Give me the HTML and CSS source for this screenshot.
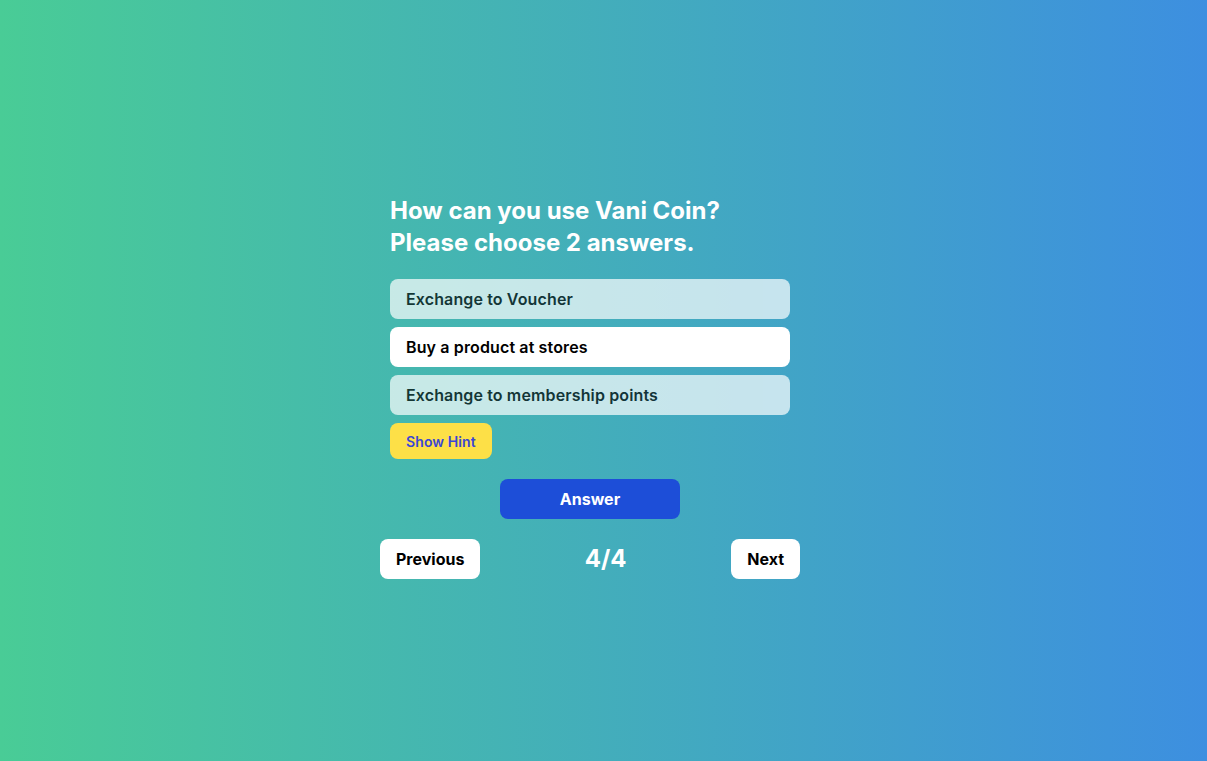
FILE: index.html
```html
<!DOCTYPE html>
<html lang="en">
<head>
<meta charset="utf-8">
<title>Quiz</title>
<link rel="stylesheet" href="styles.css">
</head>
<body>
<main class="page">
  <section class="quiz">
    <h1 class="question">How can you use Vani Coin?<br>Please choose 2 answers.</h1>
    <div class="options">
      <button class="option dim">Exchange to Voucher</button>
      <button class="option">Buy a product at stores</button>
      <button class="option dim">Exchange to membership points</button>
    </div>
    <button class="hint">Show Hint</button>
    <div class="answer-row">
      <button class="answer">Answer</button>
    </div>
    <nav class="nav">
      <button class="nav-btn prev">Previous</button>
      <span class="counter">4/4</span>
      <button class="nav-btn next">Next</button>
    </nav>
  </section>
</main>
</body>
</html>
```

FILE: styles.css
```css
* { box-sizing: border-box; }
html, body { margin: 0; height: 100%; }
body {
  font-family: Inter, "Noto Sans", sans-serif;
  background: linear-gradient(to right, #49cc96, #3d8fe0);
}
.page {
  min-height: 100vh;
  display: flex;
  align-items: center;
  justify-content: center;
  padding: 13px 27px 0 0;
}
.quiz {
  width: 400px;
  display: flex;
  flex-direction: column;
}
.question {
  margin: 0 0 20px;
  font-size: 24px;
  line-height: 32px;
  font-weight: 700;
  color: #fff;
}
.options {
  display: flex;
  flex-direction: column;
  gap: 8px;
}
button {
  font-family: inherit;
  border: 0;
  cursor: pointer;
}
.option {
  height: 40px;
  padding: 0 16px;
  text-align: left;
  background: #fff;
  color: #000;
  border-radius: 8px;
  font-size: 16px;
  font-weight: 600;
  letter-spacing: 0.13px;
}
.option.dim { opacity: 0.7; }
.hint {
  align-self: flex-start;
  margin-top: 8px;
  height: 36px;
  padding: 0 16px;
  background: #fde047;
  color: #3b46d6;
  border-radius: 8px;
  font-size: 14px;
  font-weight: 600;
  letter-spacing: 0.1px;
}
.answer-row {
  display: flex;
  justify-content: center;
  margin-top: 20px;
}
.answer {
  width: 180px;
  height: 40px;
  background: #1d4ed8;
  color: #fff;
  border-radius: 8px;
  font-size: 16px;
  font-weight: 700;
}
.nav {
  display: flex;
  align-items: center;
  justify-content: space-between;
  margin: 20px -10px 0;
}
.nav-btn {
  height: 40px;
  padding: 0 16px;
  background: #fff;
  color: #000;
  border-radius: 8px;
  font-size: 16px;
  font-weight: 700;
}
.prev { width: 100px; }
.counter {
  color: #fff;
  font-size: 24px;
  font-weight: 700;
  line-height: 32px;
}
```
